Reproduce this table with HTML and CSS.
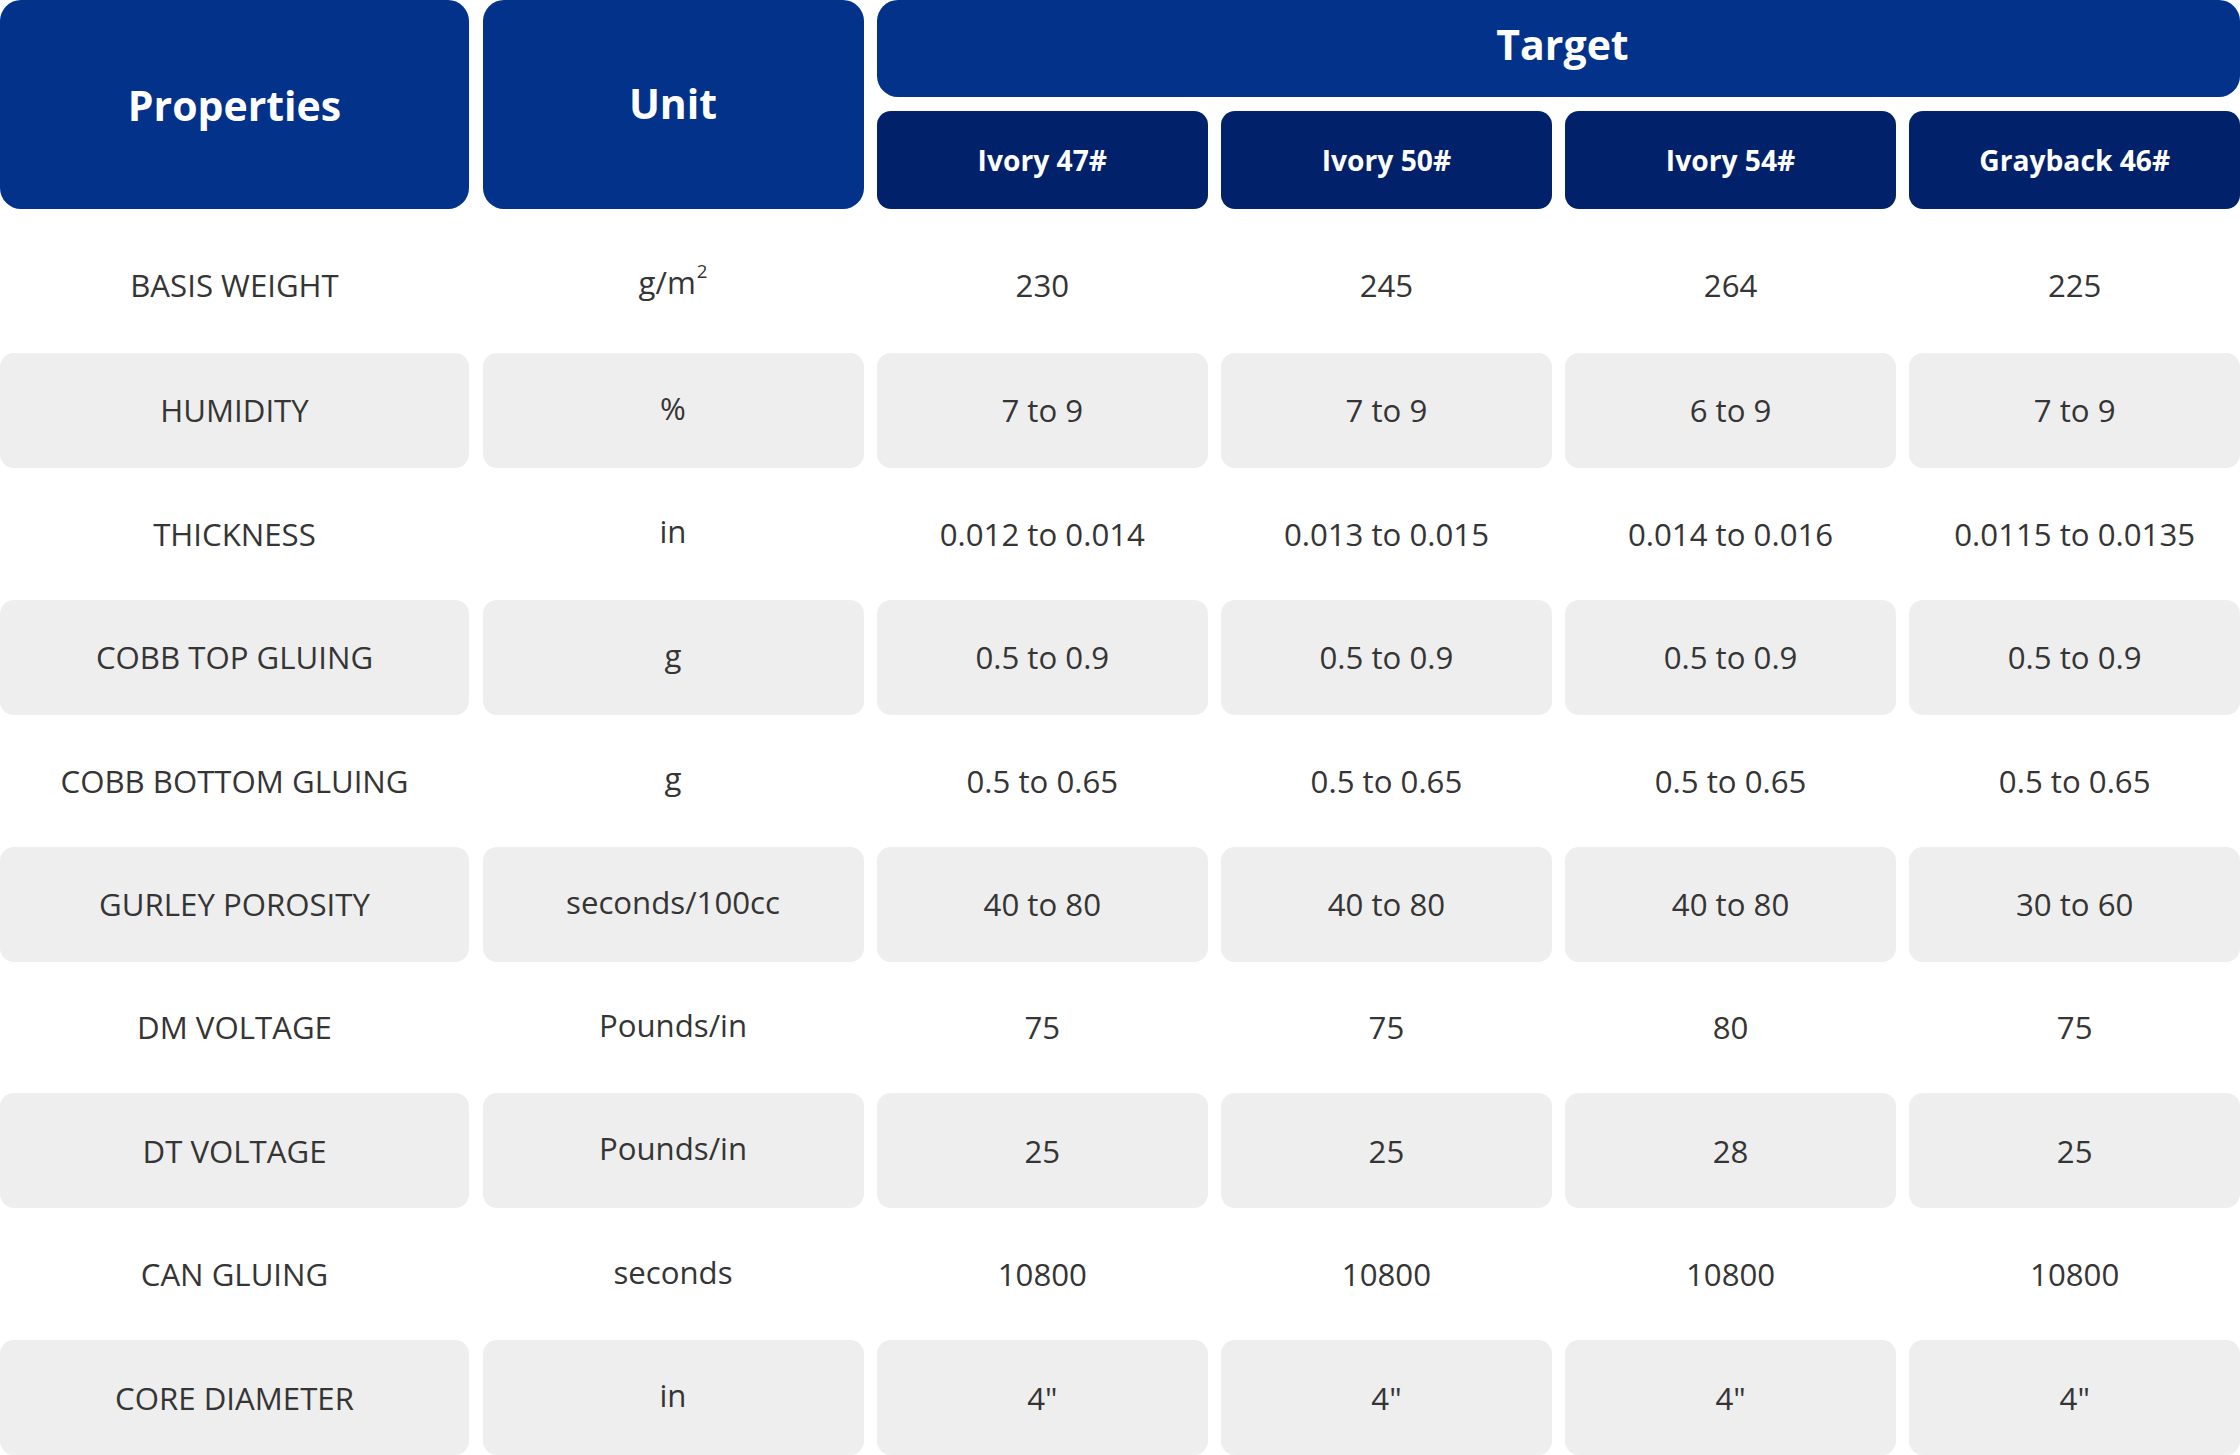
FILE: index.html
```html
<!DOCTYPE html>
<html lang="en">
<head>
<meta charset="utf-8">
<title>Properties</title>
<link rel="stylesheet" href="styles.css">
</head>
<body>
<div class="table">
  <div class="thead">
    <div class="h-main h-prop">Properties</div>
    <div class="h-main h-unit">Unit</div>
    <div class="h-target">Target</div>
    <div class="h-sub">Ivory 47#</div>
    <div class="h-sub">Ivory 50#</div>
    <div class="h-sub">Ivory 54#</div>
    <div class="h-sub">Grayback 46#</div>
  </div>
  <div class="tbody">
    <div class="row first">
      <div class="cell">BASIS WEIGHT</div><div class="cell unit">g/m<sup>2</sup></div>
      <div class="cell">230</div><div class="cell">245</div><div class="cell">264</div><div class="cell">225</div>
    </div>
    <div class="row alt">
      <div class="cell">HUMIDITY</div><div class="cell unit">%</div>
      <div class="cell">7 to 9</div><div class="cell">7 to 9</div><div class="cell">6 to 9</div><div class="cell">7 to 9</div>
    </div>
    <div class="row">
      <div class="cell">THICKNESS</div><div class="cell unit">in</div>
      <div class="cell">0.012 to 0.014</div><div class="cell">0.013 to 0.015</div><div class="cell">0.014 to 0.016</div><div class="cell">0.0115 to 0.0135</div>
    </div>
    <div class="row alt">
      <div class="cell">COBB TOP GLUING</div><div class="cell unit">g</div>
      <div class="cell">0.5 to 0.9</div><div class="cell">0.5 to 0.9</div><div class="cell">0.5 to 0.9</div><div class="cell">0.5 to 0.9</div>
    </div>
    <div class="row">
      <div class="cell">COBB BOTTOM GLUING</div><div class="cell unit">g</div>
      <div class="cell">0.5 to 0.65</div><div class="cell">0.5 to 0.65</div><div class="cell">0.5 to 0.65</div><div class="cell">0.5 to 0.65</div>
    </div>
    <div class="row alt">
      <div class="cell">GURLEY POROSITY</div><div class="cell unit">seconds/100cc</div>
      <div class="cell">40 to 80</div><div class="cell">40 to 80</div><div class="cell">40 to 80</div><div class="cell">30 to 60</div>
    </div>
    <div class="row">
      <div class="cell">DM VOLTAGE</div><div class="cell unit">Pounds/in</div>
      <div class="cell">75</div><div class="cell">75</div><div class="cell">80</div><div class="cell">75</div>
    </div>
    <div class="row alt">
      <div class="cell">DT VOLTAGE</div><div class="cell unit">Pounds/in</div>
      <div class="cell">25</div><div class="cell">25</div><div class="cell">28</div><div class="cell">25</div>
    </div>
    <div class="row">
      <div class="cell">CAN GLUING</div><div class="cell unit">seconds</div>
      <div class="cell">10800</div><div class="cell">10800</div><div class="cell">10800</div><div class="cell">10800</div>
    </div>
    <div class="row alt">
      <div class="cell">CORE DIAMETER</div><div class="cell unit">in</div>
      <div class="cell">4"</div><div class="cell">4"</div><div class="cell">4"</div><div class="cell">4"</div>
    </div>
  </div>
</div>
</body>
</html>
```

FILE: styles.css
```css
html, body {
  margin: 0;
  padding: 0;
  background: #ffffff;
}

body {
  width: 2240px;
  height: 1455px;
  overflow: hidden;
  font-family: "Open Sans", "Noto Sans", sans-serif;
}

.table {
  width: 2240px;
}

.thead {
  display: grid;
  grid-template-columns: 469px 381px repeat(4, 1fr);
  grid-template-rows: 97px 98px;
  column-gap: 13.5px;
  row-gap: 14px;
  color: #ffffff;
  font-weight: 700;
}

.h-main {
  grid-row: 1 / span 2;
  background: #03328a;
  border-radius: 21px;
  display: flex;
  align-items: center;
  justify-content: center;
  font-size: 41px;
}

.h-unit {
  padding-bottom: 4px;
}

.h-target {
  grid-column: 3 / span 4;
  background: #03328a;
  border-radius: 21px;
  display: flex;
  align-items: center;
  justify-content: center;
  font-size: 41px;
  padding-bottom: 9px;
  padding-left: 8px;
}

.h-sub {
  background: #02216b;
  border-radius: 14px;
  display: flex;
  align-items: center;
  justify-content: center;
  font-size: 28.2px;
}

.tbody {
  margin-top: 20.6px;
  display: flex;
  flex-direction: column;
  gap: 8.4px;
}

.row {
  display: grid;
  grid-template-columns: 469px 381px repeat(4, 1fr);
  column-gap: 13.5px;
  height: 115px;
}

.row.first .cell {
  padding-bottom: 5px;
}

.cell {
  display: flex;
  align-items: center;
  justify-content: center;
  font-size: 31.2px;
  color: #353535;
  border-radius: 14px;
}

.row.alt .cell {
  background: #eeeeee;
}

.cell.unit {
  padding-bottom: 5px;
}

.row.first .cell.unit {
  padding-bottom: 10px;
}

.cell sup {
  font-size: 0.6em;
  line-height: 0;
  vertical-align: 0;
  position: relative;
  top: -0.6em;
  margin-left: 1px;
}
```
